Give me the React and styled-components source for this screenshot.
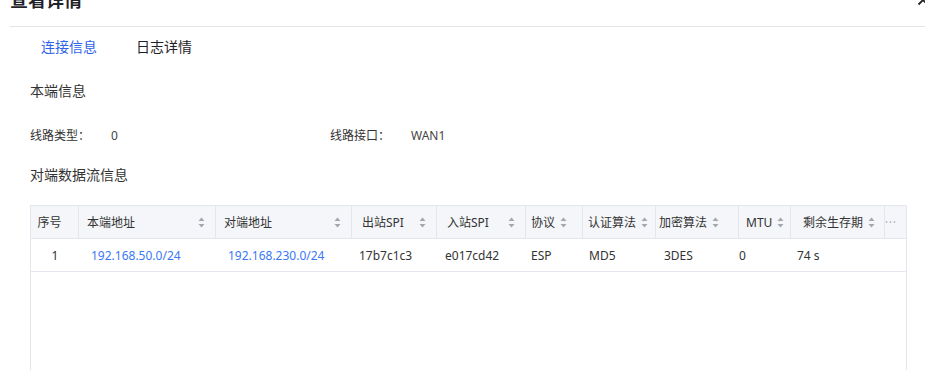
import React from 'react';
import styled, { createGlobalStyle } from 'styled-components';

const GlobalStyle = createGlobalStyle`
  html, body {
    margin: 0;
    padding: 0;
    background: #fff;
    overflow: hidden;
  }
  body {
    font-family: "Noto Sans", "Noto Sans CJK SC", sans-serif;
    color: #333;
  }
`;

const Page = styled.div`
  height: 370px;
  overflow: hidden;
`;

const Dialog = styled.div`
  margin-top: -12px;
  padding-left: 10px;
`;

const Header = styled.div`
  display: flex;
  justify-content: space-between;
  align-items: center;
  padding-bottom: 14px;
  border-bottom: 1px solid #e3e4e8;
`;

const Title = styled.h2`
  margin: 0;
  font-size: 18px;
  line-height: 24px;
  font-weight: 700;
  color: #1f2329;
`;

const Close = styled.button`
  border: 0;
  background: none;
  padding: 0;
  margin-right: -4px;
  display: flex;
  color: #222;
`;

const Tabs = styled.div`
  display: flex;
  padding-left: 11px;
`;

const Tab = styled.div`
  padding: 0 19px 0 20px;
  font-size: 14px;
  line-height: 40px;
  color: ${(p) => (p.active ? '#2f63e9' : '#1f2329')};
`;

const Body = styled.div`
  padding: 0 18px 0 20px;
`;

const SectionTitle = styled.div`
  margin-top: ${(p) => p.top}px;
  font-size: 14px;
  line-height: 22px;
  color: #333;
`;

const Fields = styled.div`
  display: flex;
  margin-top: 24px;
  font-size: 12px;
  line-height: 20px;
`;

const Field = styled.div`
  display: flex;
  width: 300px;
`;

const Label = styled.span`
  width: 81px;
  color: #333;
`;

const Value = styled.span`
  color: #444;
`;

const Table = styled.div`
  margin-top: 19px;
  border: 1px solid #e3e6ec;
  border-bottom: 0;
  min-height: 220px;
  font-size: 12px;
`;

const Row = styled.div`
  display: grid;
  grid-template-columns: 48px 137px 136px 85px 89px 57px 73px 83px 52px 94px 1fr;
  height: 32px;
  border-bottom: 1px solid #e3e6ec;
  background: ${(p) => (p.head ? '#f4f6f9' : '#fff')};
`;

const HeadCell = styled.div`
  display: flex;
  align-items: center;
  justify-content: ${(p) => (p.center ? 'center' : p.inline ? 'flex-start' : 'space-between')};
  gap: 5px;
  padding: 0 ${(p) => (p.inline ? 0 : 10)}px 0 ${(p) => (p.center ? 0 : p.pad)}px;
  color: #333;
  border-right: ${(p) => (p.last ? 'none' : '1px solid #e3e6ec')};
  white-space: nowrap;
  overflow: hidden;
`;

const Cell = styled.div`
  display: flex;
  align-items: center;
  justify-content: ${(p) => (p.center ? 'center' : 'flex-start')};
  padding-left: ${(p) => (p.center ? 0 : p.pad)}px;
  color: ${(p) => (p.link ? '#3b78f5' : '#333')};
  white-space: nowrap;
`;

const SortIcon = () => (
  <svg width="7" height="11" viewBox="0 0 7 11" style={{ flexShrink: 0 }}>
    <path d="M3.5 0.5 L6.5 4 L0.5 4 Z" fill="#a3a7ae" />
    <path d="M3.5 10.5 L6.5 7 L0.5 7 Z" fill="#a3a7ae" />
  </svg>
);

const columns = [
  { title: '序号', key: 'idx', center: true },
  { title: '本端地址', key: 'local', hp: 8, bp: 12, link: true },
  { title: '对端地址', key: 'peer', hp: 8, bp: 12, link: true },
  { title: '出站SPI', key: 'out', hp: 10, bp: 7 },
  { title: '入站SPI', key: 'in', hp: 10, bp: 8 },
  { title: '协议', key: 'proto', hp: 5, bp: 5, inline: true },
  { title: '认证算法', key: 'auth', hp: 5, bp: 6, inline: true },
  { title: '加密算法', key: 'enc', hp: 3, bp: 8, inline: true },
  { title: 'MTU', key: 'mtu', hp: 7, bp: 0, inline: true },
  { title: '剩余生存期', key: 'life', hp: 12, bp: 6, inline: true },
];

const rows = [
  {
    idx: '1',
    local: '192.168.50.0/24',
    peer: '192.168.230.0/24',
    out: '17b7c1c3',
    in: 'e017cd42',
    proto: 'ESP',
    auth: 'MD5',
    enc: '3DES',
    mtu: '0',
    life: '74 s',
  },
];

export default function App() {
  return (
    <Page>
      <GlobalStyle />
      <Dialog>
        <Header>
          <Title>查看详情</Title>
          <Close aria-label="关闭">
            <svg width="12" height="12" viewBox="0 0 12 12">
              <path d="M1.5 1.5 L10.5 10.5 M10.5 1.5 L1.5 10.5" stroke="#222" strokeWidth="1.8" />
            </svg>
          </Close>
        </Header>
        <Tabs>
          <Tab active>连接信息</Tab>
          <Tab>日志详情</Tab>
        </Tabs>
        <Body>
          <SectionTitle top={13}>本端信息</SectionTitle>
          <Fields>
            <Field>
              <Label>线路类型：</Label>
              <Value>0</Value>
            </Field>
            <Field>
              <Label>线路接口：</Label>
              <Value>WAN1</Value>
            </Field>
          </Fields>
          <SectionTitle top={18}>对端数据流信息</SectionTitle>
          <Table>
            <Row head>
              {columns.map((c) => (
                <HeadCell key={c.key} center={c.center} inline={c.inline} pad={c.hp}>
                  {c.title}
                  {!c.center && <SortIcon />}
                </HeadCell>
              ))}
              <HeadCell center last>
                <svg width="14" height="4" viewBox="0 0 14 4">
                  <circle cx="2" cy="2" r="1.1" fill="#a3a7ae" />
                  <circle cx="7" cy="2" r="1.1" fill="#a3a7ae" />
                  <circle cx="12" cy="2" r="1.1" fill="#a3a7ae" />
                </svg>
              </HeadCell>
            </Row>
            {rows.map((r) => (
              <Row key={r.idx}>
                {columns.map((c) => (
                  <Cell key={c.key} center={c.center} pad={c.bp} link={c.link}>
                    {r[c.key]}
                  </Cell>
                ))}
                <Cell />
              </Row>
            ))}
          </Table>
        </Body>
      </Dialog>
    </Page>
  );
}
